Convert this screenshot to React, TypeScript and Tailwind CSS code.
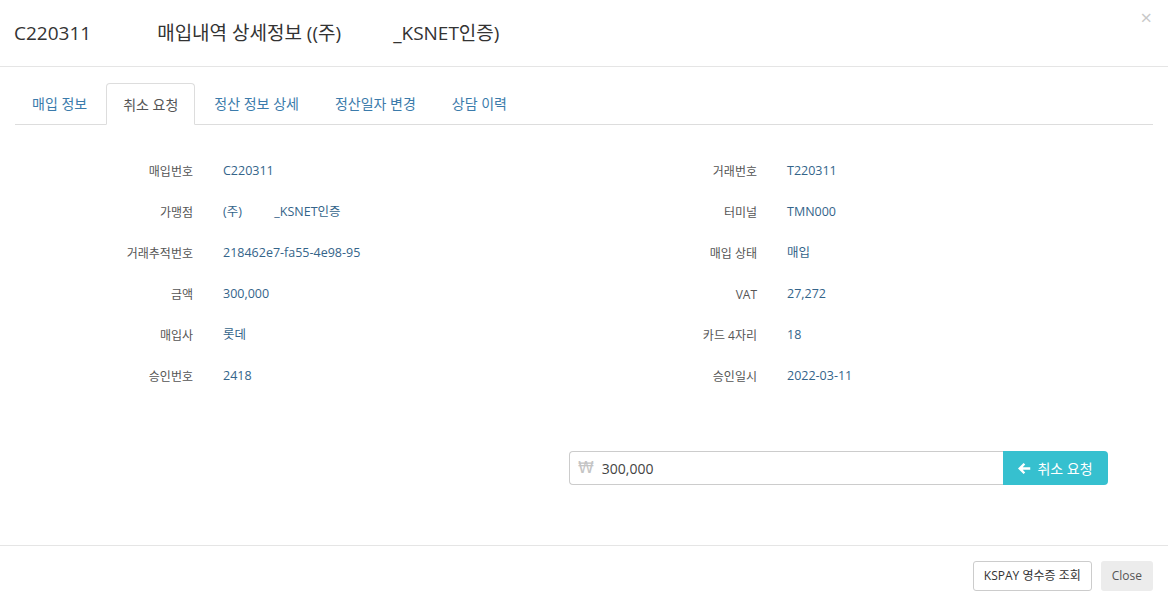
import React from 'react';

const font = { fontFamily: '"Open Sans", "Noto Sans CJK KR", sans-serif' };

const leftRows: [string, string][] = [
    ['매입번호', 'C220311'],
    ['가맹점', '(주)          _KSNET인증'],
    ['거래추적번호', '218462e7-fa55-4e98-95'],
    ['금액', '300,000'],
    ['매입사', '롯데'],
    ['승인번호', '2418'],
];

const rightRows: [string, string][] = [
    ['거래번호', 'T220311'],
    ['터미널', 'TMN000'],
    ['매입 상태', '매입'],
    ['VAT', '27,272'],
    ['카드 4자리', '18'],
    ['승인일시', '2022-03-11'],
];

const tabs = ['매입 정보', '취소 요청', '정산 정보 상세', '정산일자 변경', '상담 이력'];

function InfoColumn({ rows }: { rows: [string, string][] }) {
    return (
        <div className="flex flex-col">
            {rows.map(([label, value]) => (
                <div key={label} className="flex h-[41px] items-center">
                    <div className="w-[178px] text-right text-[12px] text-[#555]">{label}</div>
                    <div className="ml-[30px] whitespace-pre text-[12.5px] text-[#34648a]">{value}</div>
                </div>
            ))}
        </div>
    );
}

export default function App() {
    return (
        <div className="flex h-[606px] w-[1168px] flex-col bg-white text-[#333]" style={font}>
            {/* header */}
            <div className="relative flex h-[67px] shrink-0 items-center border-b border-[#e5e5e5] px-[14px]">
                <h4 className="text-[19px] font-normal text-[#333] whitespace-pre">
                    C220311<span className="inline-block w-[66px]" />매입내역 상세정보 ((주)<span className="inline-block w-[52px]" />_KSNET인증)
                </h4>
                <span className="absolute right-[16px] top-[8px] text-[20px] leading-none text-[#c8c8c8]">×</span>
            </div>

            {/* body */}
            <div className="flex-1 px-[15px] pt-[16px]">
                <div className="flex h-[42px] border-b border-[#ddd]">
                    {tabs.map((t, i) =>
                        i === 1 ? (
                            <div
                                key={t}
                                className="-mb-px mr-[2px] flex items-center rounded-t-[4px] border border-b-white border-[#ddd] bg-white px-[16px] text-[14px] text-[#555]"
                            >
                                {t}
                            </div>
                        ) : (
                            <div key={t} className="mr-[2px] flex items-center px-[17px] text-[14px] text-[#3b7bab]">
                                {t}
                            </div>
                        )
                    )}
                </div>

                <div className="mt-[26px] grid grid-cols-[564px_564px]">
                    <InfoColumn rows={leftRows} />
                    <InfoColumn rows={rightRows} />
                </div>

                <div className="mt-[54px] flex justify-end pr-[45px]">
                    <div className="flex h-[34px] w-[539px]">
                        <div className="flex flex-1 items-center rounded-l-[4px] border border-r-0 border-[#ccc] px-[8px] text-[14px]">
                            <span className="text-[16px] text-[#c4c4c4]" style={{ fontFamily: '"DejaVu Sans", sans-serif' }}>
                                ₩
                            </span>
                            <span className="ml-[8px] text-[#444]">300,000</span>
                        </div>
                        <button className="flex w-[105px] items-center justify-center gap-[6px] rounded-r-[4px] bg-[#36c0cf] text-[14px] text-white">
                            <svg width="13" height="13" viewBox="0 0 14 14" fill="white">
                                <path d="M6 1 7.8 2.8 5.1 5.6H13.2v2.8H5.1l2.7 2.8L6 13 0 7z" />
                            </svg>
                            취소 요청
                        </button>
                    </div>
                </div>
            </div>

            {/* footer */}
            <div className="flex shrink-0 justify-end gap-[9px] border-t border-[#e5e5e5] px-[15px] py-[15px]">
                <button className="h-[30px] rounded-[3px] border border-[#ccc] bg-white px-[10px] text-[12px] text-[#333]">
                    KSPAY 영수증 조회
                </button>
                <button className="h-[30px] rounded-[3px] bg-[#ececec] px-[11px] text-[12px] text-[#555]">
                    Close
                </button>
            </div>
        </div>
    );
}
